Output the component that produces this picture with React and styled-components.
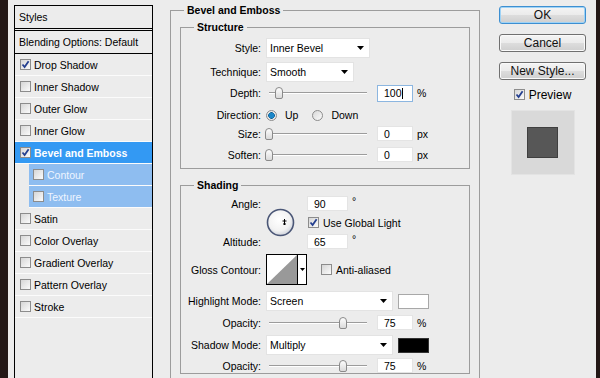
import React from "react";
import styled, { createGlobalStyle } from "styled-components";

const GlobalStyle = createGlobalStyle`
  html, body {
    margin: 0;
    padding: 0;
    background: #ececec;
  }
  body {
    font-family: "Liberation Sans", Arial, sans-serif;
    font-size: 10.5px;
    color: #000;
  }
`;

const Dialog = styled.div`
  display: flex;
  width: 600px;
  height: 378px;
  overflow: hidden;
  background: #ececec;
`;

const Edge = styled.div`
  flex: 0 0 ${(p) => p.$w}px;
  background: #231816;
`;

/* ---------- left list of styles ---------- */

const StylesPanel = styled.div`
  flex: 0 0 139px;
  height: 400px;
  margin: 5px 0 0 6px;
  box-sizing: border-box;
  border: 1px solid #000;
`;

const PanelHead = styled.div`
  height: 22px;
  display: flex;
  align-items: center;
  padding-left: 4px;
  border-bottom: ${(p) => (p.$double ? "3px double #000" : "1px solid #000")};
`;

const StyleItem = styled.div`
  height: 21px;
  display: flex;
  align-items: center;
  gap: 3px;
  margin-left: ${(p) => (p.$sub ? 14 : 0)}px;
  padding-left: ${(p) => (p.$sub ? 4 : 5)}px;
  border-bottom: 1px solid #fbfbfb;
  background: ${(p) => (p.$active ? "#3399f3" : p.$sub ? "#8ebdf0" : "transparent")};
  color: ${(p) => (p.$active ? "#fff" : p.$sub ? "#eef5ff" : "#000")};
  font-weight: ${(p) => (p.$active ? 700 : 400)};
`;

const Box = styled.span`
  flex: 0 0 11px;
  height: 11px;
  box-sizing: border-box;
  border: 1px solid #8c8c8c;
  background: linear-gradient(135deg, #d6d6d6, #fbfbfb);
  display: flex;
  align-items: center;
  justify-content: center;
`;

const Check = ({ on }) => (
  <Box>
    {on && (
      <svg width="9" height="9" viewBox="0 0 9 9">
        <path d="M1.5 4.5 L3.6 7 L7.6 1.3" fill="none" stroke="#243f8f" strokeWidth="1.8" />
      </svg>
    )}
  </Box>
);

/* ---------- group boxes ---------- */

const Main = styled.div`
  flex: 0 0 327px;
  box-sizing: border-box;
  padding: 3px 0 0 17px;
`;

const Group = styled.fieldset`
  margin: ${(p) => p.$mt || 0}px 0 0;
  padding: 0;
  min-width: 0;
  border: 1px solid #9c9c9c;
  ${(p) => p.$tall && "height: 420px;"}
`;

const GroupTitle = styled.legend`
  margin-left: 13px;
  padding: 0 3px;
  font-weight: 700;
  line-height: 14px;
`;

const GroupBody = styled.div`
  padding: ${(p) => p.$pad};
`;

const Row = styled.div`
  display: flex;
  align-items: center;
  height: ${(p) => p.$h}px;
  margin-top: ${(p) => p.$mt || 0}px;
`;

const Label = styled.span`
  flex: 0 0 85px;
  box-sizing: border-box;
  padding-right: 5px;
  text-align: right;
  white-space: nowrap;
`;

const SelectBox = styled.div`
  width: ${(p) => p.$w}px;
  height: 20px;
  box-sizing: border-box;
  display: flex;
  align-items: center;
  justify-content: space-between;
  padding: 0 5px 0 3px;
  background: #fff;
  border: 1px solid #e3e3e3;
`;

const Select = ({ w, children }) => (
  <SelectBox $w={w}>
    <span>{children}</span>
    <svg width="7" height="4" viewBox="0 0 7 4">
      <polygon points="0,0 7,0 3.5,4" fill="#000" />
    </svg>
  </SelectBox>
);

const Field = styled.div`
  width: ${(p) => p.$w || 36}px;
  height: ${(p) => p.$h || 15}px;
  box-sizing: border-box;
  display: flex;
  align-items: center;
  padding-left: 6px;
  background: #fff;
  border: 1px solid ${(p) => (p.$focus ? "#8cb6e0" : "#e4e4e4")};
`;

const Caret = styled.span`
  width: 1px;
  height: 11px;
  background: #000;
`;

const Unit = styled.span`
  margin-left: 4px;
  align-self: ${(p) => (p.$sup ? "flex-start" : "center")};
  line-height: ${(p) => (p.$sup ? "10px" : "normal")};
`;

const Track = styled.div`
  position: relative;
  width: 106px;
  height: 14px;
  margin-right: 5px;
  &::before {
    content: "";
    position: absolute;
    left: 3px;
    right: 5px;
    top: 6px;
    height: 1px;
    background: #9c9c9c;
    box-shadow: 0 1px 0 #fff;
  }
`;

const Thumb = styled.span`
  position: absolute;
  top: 1px;
  width: 8px;
  height: 12px;
  margin-left: -4px;
  box-sizing: border-box;
  border: 1px solid #8a8a8a;
  border-radius: 4px 4px 2px 2px;
  background: linear-gradient(#fdfdfd, #dadada);
`;

const Slider = ({ pct }) => (
  <Track>
    <Thumb style={{ left: 3 + pct * 98 }} />
  </Track>
);

const Radio = styled.span`
  flex: 0 0 11px;
  height: 11px;
  box-sizing: border-box;
  border-radius: 50%;
  border: 1px solid #8c8c8c;
  margin-left: ${(p) => p.$ml || 0}px;
  margin-right: 4px;
  background: ${(p) =>
    p.$on
      ? "radial-gradient(circle, #1a86c8 0 2.6px, #0d5f95 3px, #e8e8e8 3.6px)"
      : "linear-gradient(135deg, #d8d8d8, #fafafa)"};
`;

const Option = styled.label`
  display: flex;
  align-items: center;
  gap: 4px;
  margin-left: ${(p) => p.$ml || 0}px;
`;

/* ---------- shading ---------- */

const AngleGrid = styled.div`
  display: grid;
  grid-template-columns: 85px 41px auto;
  grid-template-rows: 15px 23px 15px;
  align-items: center;
`;

const Cell = styled.div`
  display: flex;
  align-items: center;
  grid-column: ${(p) => p.$col};
  grid-row: ${(p) => p.$row};
  height: 100%;
`;

const Dial = () => (
  <svg width="29" height="29" viewBox="0 0 29 29">
    <defs>
      <radialGradient id="dialFill" cx="45%" cy="40%" r="60%">
        <stop offset="0" stopColor="#ffffff" />
        <stop offset="0.7" stopColor="#f2f2f2" />
        <stop offset="1" stopColor="#cfd3dc" />
      </radialGradient>
    </defs>
    <circle cx="14.5" cy="14.5" r="13" fill="url(#dialFill)" stroke="#4a5676" strokeWidth="1.6" />
    <path d="M18.5 11 V15 M16.5 13 H20.5" stroke="#000" strokeWidth="1" />
    <rect x="17.5" y="15" width="2" height="2" fill="#000" />
  </svg>
);

const ContourSwatch = styled.div`
  display: flex;
  width: 41px;
  height: 31px;
  box-sizing: border-box;
  border: 1px solid #000;
  background: #fff;
`;

const ContourArrow = styled.div`
  flex: 1;
  display: flex;
  align-items: center;
  justify-content: center;
  border-left: 1px solid #000;
`;

const ColorChip = styled.span`
  width: 31px;
  height: 15px;
  margin-left: 5px;
  box-sizing: border-box;
  background: ${(p) => p.$color};
  border: 1px solid ${(p) => (p.$color === "#000" ? "#333" : "#a8a8a8")};
`;

/* ---------- right buttons ---------- */

const Side = styled.div`
  flex: 0 0 87px;
  margin-left: 19px;
  padding-top: 6px;
  display: flex;
  flex-direction: column;
  align-items: center;
`;

const ButtonStack = styled.div`
  display: flex;
  flex-direction: column;
  gap: 10px;
`;

const Button = styled.div`
  width: 87px;
  height: 18px;
  box-sizing: border-box;
  display: flex;
  align-items: center;
  justify-content: center;
  font-size: 12px;
  color: #111;
  border-radius: 3px;
  border: 1px solid ${(p) => (p.$default ? "#3d8fd1" : "#707070")};
  box-shadow: ${(p) => (p.$default ? "inset 0 0 0 1px #9fd3f6" : "inset 0 0 0 1px #fafafa")};
  background: linear-gradient(#f4f4f4, #ebebeb 50%, #dddddd 51%, #cfcfcf);
`;

const PreviewRow = styled.label`
  display: flex;
  align-items: center;
  gap: 4px;
  margin-top: 8px;
  height: 13px;
  font-size: 12px;
`;

const PreviewBox = styled.div`
  width: 64px;
  height: 65px;
  margin-top: 9px;
  box-sizing: border-box;
  display: flex;
  align-items: center;
  justify-content: center;
  background: #d9d9d9;
  border: 1px solid #e3e3e3;
`;

const PreviewSwatch = styled.div`
  width: 31px;
  height: 31px;
  box-sizing: border-box;
  background: #575757;
  border: 1px solid #3f3f3f;
`;

const Filler = styled.div`
  flex: 1;
`;

const styleList = [
  { name: "Drop Shadow", on: true },
  { name: "Inner Shadow" },
  { name: "Outer Glow" },
  { name: "Inner Glow" },
  { name: "Bevel and Emboss", on: true, active: true },
  { name: "Contour", sub: true },
  { name: "Texture", sub: true },
  { name: "Satin" },
  { name: "Color Overlay" },
  { name: "Gradient Overlay" },
  { name: "Pattern Overlay" },
  { name: "Stroke" },
];

export default function App() {
  return (
    <>
      <GlobalStyle />
      <Dialog>
        <Edge $w={8} />
        <StylesPanel>
          <PanelHead $double>Styles</PanelHead>
          <PanelHead>Blending Options: Default</PanelHead>
          {styleList.map((s) => (
            <StyleItem key={s.name} $active={s.active} $sub={s.sub}>
              <Check on={s.on} />
              {s.name}
            </StyleItem>
          ))}
        </StylesPanel>

        <Main>
          <Group $tall>
            <GroupTitle>Bevel and Emboss</GroupTitle>
            <GroupBody $pad="3px 9px 0">
              <Group>
                <GroupTitle>Structure</GroupTitle>
                <GroupBody $pad="4px 0 6px">
                  <Row $h={20}>
                    <Label>Style:</Label>
                    <Select w={104}>Inner Bevel</Select>
                  </Row>
                  <Row $h={20} $mt={4}>
                    <Label>Technique:</Label>
                    <Select w={88}>Smooth</Select>
                  </Row>
                  <Row $h={18} $mt={2}>
                    <Label>Depth:</Label>
                    <Slider pct={0.1} />
                    <Field $h={17} $focus>
                      100
                      <Caret />
                    </Field>
                    <Unit>%</Unit>
                  </Row>
                  <Row $h={18} $mt={4}>
                    <Label>Direction:</Label>
                    <Option>
                      <Radio $on />
                      Up
                    </Option>
                    <Option $ml={14}>
                      <Radio />
                      Down
                    </Option>
                  </Row>
                  <Row $h={15} $mt={2}>
                    <Label>Size:</Label>
                    <Slider pct={0} />
                    <Field>0</Field>
                    <Unit>px</Unit>
                  </Row>
                  <Row $h={15} $mt={6}>
                    <Label>Soften:</Label>
                    <Slider pct={0} />
                    <Field>0</Field>
                    <Unit>px</Unit>
                  </Row>
                </GroupBody>
              </Group>

              <Group $mt={9}>
                <GroupTitle>Shading</GroupTitle>
                <GroupBody $pad="4px 0 0">
                  <AngleGrid>
                    <Cell $col="1" $row="1">
                      <Label>Angle:</Label>
                    </Cell>
                    <Cell $col="2" $row="1 / span 3">
                      <Dial />
                    </Cell>
                    <Cell $col="3" $row="1">
                      <Field $w={41}>90</Field>
                      <Unit $sup>°</Unit>
                    </Cell>
                    <Cell $col="3" $row="2">
                      <Option $ml={1}>
                        <Check on />
                        Use Global Light
                      </Option>
                    </Cell>
                    <Cell $col="1" $row="3">
                      <Label>Altitude:</Label>
                    </Cell>
                    <Cell $col="3" $row="3">
                      <Field $w={41}>65</Field>
                      <Unit $sup>°</Unit>
                    </Cell>
                  </AngleGrid>
                  <Row $h={31} $mt={5}>
                    <Label>Gloss Contour:</Label>
                    <ContourSwatch>
                      <svg width="30" height="29" viewBox="0 0 30 29">
                        <polygon points="0,29 30,0 30,29" fill="#999" />
                      </svg>
                      <ContourArrow>
                        <svg width="5" height="3" viewBox="0 0 5 3">
                          <polygon points="0,0 5,0 2.5,3" fill="#000" />
                        </svg>
                      </ContourArrow>
                    </ContourSwatch>
                    <Option $ml={14}>
                      <Check />
                      Anti-aliased
                    </Option>
                  </Row>
                  <Row $h={20} $mt={6}>
                    <Label>Highlight Mode:</Label>
                    <Select w={127}>Screen</Select>
                    <ColorChip $color="#fff" />
                  </Row>
                  <Row $h={15} $mt={4}>
                    <Label>Opacity:</Label>
                    <Slider pct={0.75} />
                    <Field>75</Field>
                    <Unit>%</Unit>
                  </Row>
                  <Row $h={20} $mt={5}>
                    <Label>Shadow Mode:</Label>
                    <Select w={127}>Multiply</Select>
                    <ColorChip $color="#000" />
                  </Row>
                  <Row $h={15} $mt={3}>
                    <Label>Opacity:</Label>
                    <Slider pct={0.75} />
                    <Field>75</Field>
                    <Unit>%</Unit>
                  </Row>
                </GroupBody>
              </Group>
            </GroupBody>
          </Group>
        </Main>

        <Side>
          <ButtonStack>
            <Button $default>OK</Button>
            <Button>Cancel</Button>
            <Button>New Style...</Button>
          </ButtonStack>
          <PreviewRow>
            <Check on />
            Preview
          </PreviewRow>
          <PreviewBox>
            <PreviewSwatch />
          </PreviewBox>
        </Side>
        <Filler />
        <Edge $w={4} />
      </Dialog>
    </>
  );
}
